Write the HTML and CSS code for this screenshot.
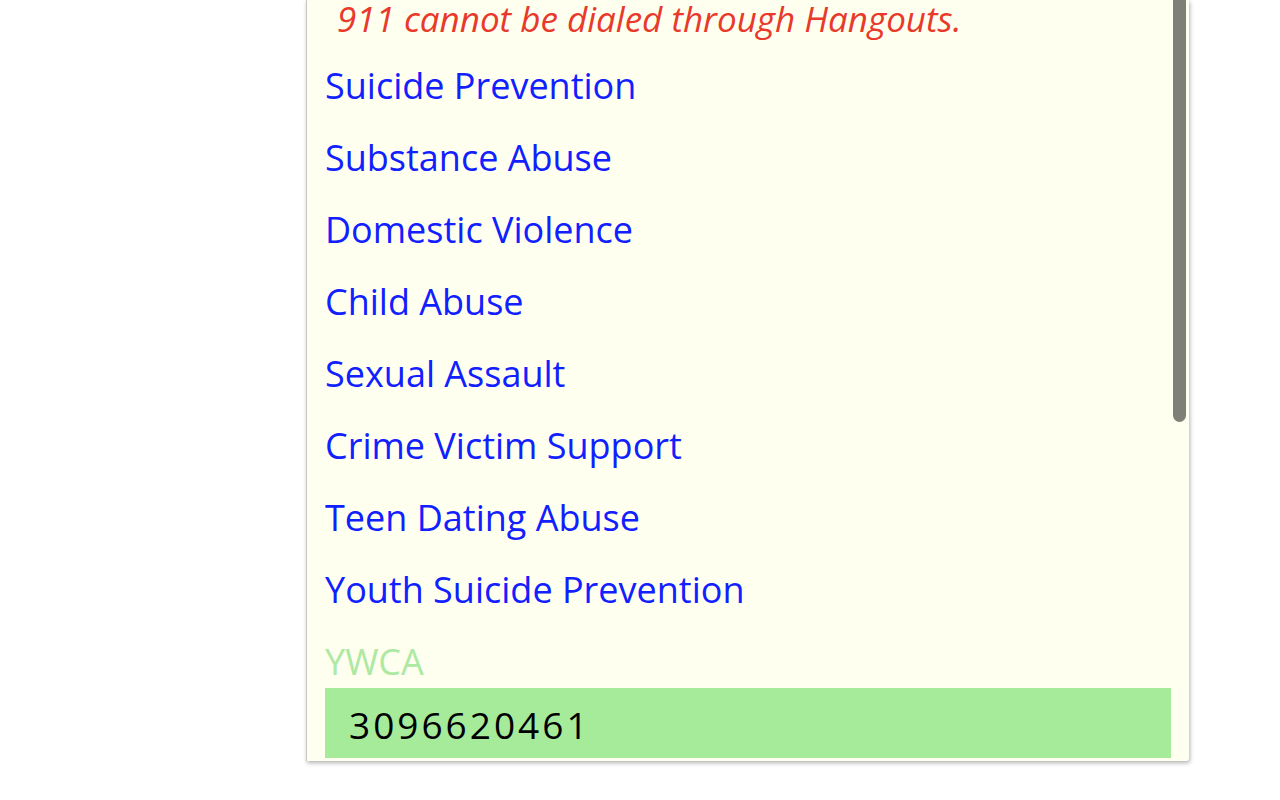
FILE: index.html
```html
<!DOCTYPE html>
<html>
<head>
<meta charset="utf-8">
<link rel="stylesheet" href="styles.css">
</head>
<body>
<div class="panel">
  <div class="scroll-thumb"></div>
  <p class="warning">911 cannot be dialed through Hangouts.</p>
  <ul class="list">
    <li class="item">Suicide Prevention</li>
    <li class="item">Substance Abuse</li>
    <li class="item">Domestic Violence</li>
    <li class="item">Child Abuse</li>
    <li class="item">Sexual Assault</li>
    <li class="item">Crime Victim Support</li>
    <li class="item">Teen Dating Abuse</li>
    <li class="item">Youth Suicide Prevention</li>
    <li class="item item-active">YWCA</li>
  </ul>
  <div class="number">3096620461</div>
</div>
</body>
</html>
```
FILE: styles.css
```css
html, body {
  margin: 0;
  padding: 0;
  background: #ffffff;
  height: 800px;
  overflow: hidden;
}
.panel {
  position: relative;
  margin-left: 306px;
  width: 883px;
  height: 761px;
  box-sizing: border-box;
  padding: 0 18px;
  background: #fffff0;
  border-left: 1px solid #c8c8c0;
  border-bottom-right-radius: 3px;
  box-shadow: 1px 2px 4px rgba(0,0,0,0.3);
  font-family: "Open Sans", "Liberation Sans", sans-serif;
}
.scroll-thumb {
  position: absolute;
  right: 3px;
  top: 0;
  width: 13px;
  height: 422px;
  background: #7e8077;
  border-radius: 0 0 7px 7px;
}
.warning {
  margin: 0;
  padding-left: 12px;
  height: 50px;
  line-height: 38px;
  font-size: 35px;
  font-style: italic;
  color: #e8392b;
}
.list {
  list-style: none;
  margin: 0;
  padding: 0;
}
.item {
  height: 72px;
  line-height: 72px;
  font-size: 36px;
  color: #1020ff;
}
.item-active {
  color: #ade9a2;
  height: 62px;
}
.number {
  height: 70px;
  line-height: 74px;
  background: #a6eb9a;
  color: #000;
  font-size: 37px;
  padding-left: 24px;
  letter-spacing: 3px;
}
```
